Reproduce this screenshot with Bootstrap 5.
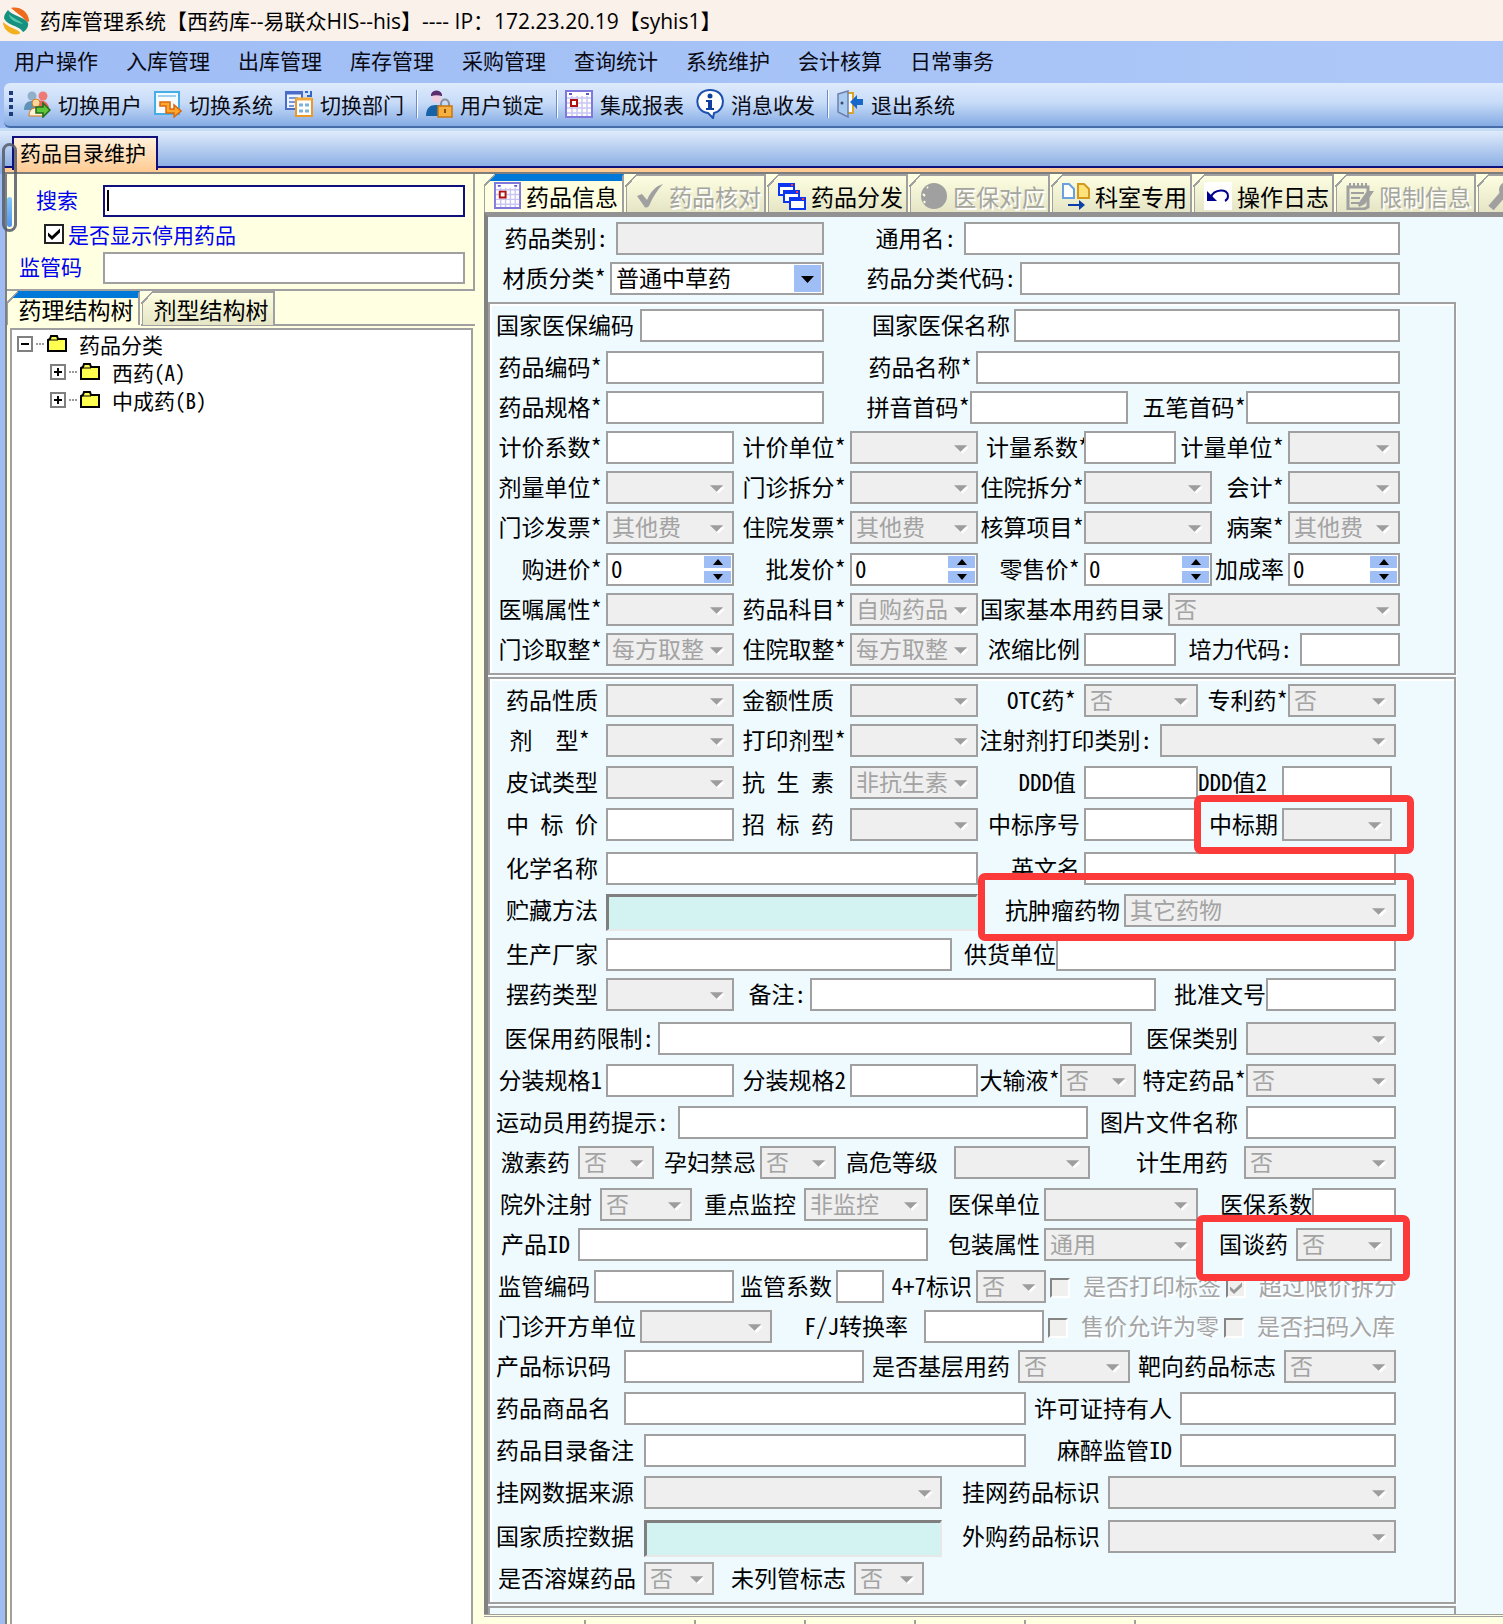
<!DOCTYPE html>
<html lang="zh-CN">
<head>
<meta charset="utf-8">
<meta name="viewport" content="width=device-width, initial-scale=1">
<title>药库管理系统</title>
<link href="https://cdn.jsdelivr.net/npm/bootstrap@5.3.0/dist/css/bootstrap.min.css" rel="stylesheet">
<style>
:root{--line:#a0a0a0;--cream:#ffffe1;--ice:#effaff;--cjk:"Noto Sans Mono CJK SC","Noto Sans CJK SC",sans-serif}
body{font:21px/28px "Noto Sans CJK SC",sans-serif;color:#000;background:#9fbdf3}
button{font:inherit}
svg{display:block;flex:none}

/* window title, menu, toolbar */
.titlebar{height:41px;background:#f9f1ea;padding-left:2px;gap:10px;font-family:"Open Sans","Noto Sans CJK SC",sans-serif}
.menubar{height:42px;background:linear-gradient(90deg,#9fbdf5,#adc8f8);gap:28px;padding:0 0 4px 14px}
.menubar a,.toolbar button{color:#0a0a14;text-decoration:none;white-space:nowrap}
.toolbar{height:45px;margin-left:4px;padding:0 0 2px 5px;border-bottom:2px solid #466ca8;border-radius:6px 0 0 6px;background:linear-gradient(#deeafc,#c8dcf8 45%,#84abe4)}
.toolbar button{border:0;background:none;padding:0;margin-right:12px;gap:7px}
.grip{width:4px;height:26px;margin-right:10px;background:repeating-linear-gradient(#1f3a78 0 4px,transparent 4px 7px)}
.tool-sep{width:2px;height:28px;margin-right:7px;background:linear-gradient(90deg,#6a8ccb 50%,#fff 50%)}
.pagestrip{height:46px;padding:5px 0 0 12px;border-top:3px solid #c4ddf6;background:linear-gradient(#e0ebfb,#86abe3 38px)}
.pagestrip::before{content:"";position:absolute;left:4px;right:0;bottom:0;height:8px;border-top:2px solid #10107c;border-bottom:2px solid #7d7d7d;background:#ffcb92}
.pagetab{position:relative;height:34px;width:146px;border:2px solid #10107c;border-bottom:0;padding:0 0 4px 6px;line-height:28px;text-align:left;background:linear-gradient(#fff0da,#ffcd96);white-space:nowrap}
.edge-scroll{left:2px;top:143px;width:15px;height:89px;border:3px solid #555c68;border-radius:8px;opacity:.85;padding:51px 0 0 2px}
.edge-scroll span{display:block;width:5px;height:30px;border-radius:3px;background:linear-gradient(#6cc0ff,#2f80f0)}

/* work area */
.work{margin-left:5px;border-left:2px solid #808080;background:var(--cream)}
.side{width:468px;flex:none}
.search-box{height:117px;padding:11px 8px 0 0;border:solid var(--line);border-width:0 2px 2px 0}
.search-box label{color:#0000f0}
.search-box .row-label{width:96px;padding-left:12px}
.search-box .form-control{height:32px;border-width:2px}
.search-box .is-focus{border-color:#10107c}
.search-box .tick-line{padding-left:37px;height:28px;margin:3px 0 4px}
.caret{left:4px;top:5px;width:2px;height:21px;background:#000}
.form-control,.form-select{border:2px solid var(--line);border-radius:0;padding:0 0 0 4px;color:#000;font:inherit;line-height:26px;background-color:#fff;min-width:0}
.form-check-input[type=checkbox]{width:20px;height:20px;margin:0;flex:none;border:2px solid #222;border-radius:0;background-color:#fff;float:none}
.form-check-input[type=checkbox]:checked{background-color:#fff;border-color:#222;background-size:16px;background-image:url("data:image/svg+xml,%3csvg xmlns='http://www.w3.org/2000/svg' viewBox='0 0 16 16'%3e%3cpath d='M2 6.500l4 3.500 8-7.500v4l-8 7.500-4-4z'/%3e%3c/svg%3e")}
.form-check-input[type=checkbox]:disabled{opacity:1;background-color:#f0f0ee;border-color:#858585 #fff #fff #858585}
.form-check-input[type=checkbox]:checked:disabled{background-image:url("data:image/svg+xml,%3csvg xmlns='http://www.w3.org/2000/svg' viewBox='0 0 16 16'%3e%3cpath fill='%239a9a9a' d='M2 6.500l4 3.500 8-7.500v4l-8 7.500-4-4z'/%3e%3c/svg%3e")}

.sheet-tabs{flex-wrap:nowrap;gap:2px;overflow:hidden;font:23px/32px var(--cjk)}
.sheet-tabs .nav-link{position:relative;border:2px solid var(--line);border-width:2px 2px 0 1px;border-radius:0;color:#000;white-space:nowrap;background:linear-gradient(#fdfde1,#e5e5c6);padding:0}
.sheet-tabs .nav-link::before{content:"";position:absolute;left:-2px;top:-2px;width:12px;height:13px;background:linear-gradient(to bottom right,var(--cream) 46%,var(--line) 46% 56%,transparent 56%)}
.sheet-tabs .nav-link.active{background:linear-gradient(#0078d7 5px,var(--cream) 5px);border-top-color:#0078d7}
.sheet-tabs .nav-link:disabled{color:#a5a5a0;text-shadow:2px 2px 0 #fff}
.tree-tabs .nav-link{width:133px;height:34px;padding-left:6px}
.info-tabs .nav-link{width:140px;height:38px;padding:3px 0 0 9px;gap:5px;flex:none;display:flex;align-items:center}
.tree-rule{height:2px;margin:-1px 0 2px 134px;background:var(--line)}
.tree{margin:0 2px 0 3px;border:2px solid var(--line);border-bottom:0;background:#fff;padding:0 0 0 5px;font:21px/26px var(--cjk)}
.tree ul{padding-left:33px}
.tree .node{height:28px}
.tree-toggle{width:16px;height:16px;border:2px solid #808080;background:#fff;padding:0}
.tree-dots{width:8px;margin:0 3px;border-top:2px dotted #999}
.tree .node span{margin-left:12px}

.main-pane{min-width:0;margin-left:9px}
.drug-form{border-left:4px solid #828282;border-top:5px solid #929292;background:var(--ice);font:23px/33px var(--cjk)}
.drug-head{padding:5px 103px 0 8px}
.block{margin:0 47px 2px 0;padding:5px 54px 0 6px;border:2px solid var(--line);box-shadow:inset 2px 2px 0 #fff,1px 1px 0 #fff}
.ln{display:flex;align-items:flex-start;min-height:40px;white-space:pre}
.ln-42{min-height:42px}
.ln-44{min-height:44px}
.ln>*{flex:none}
.ln label{flex:none;text-align:right;padding-right:4px;line-height:30px}
.ln .form-control,.ln .form-select{height:33px;padding-bottom:4px}
.ln .form-select{--bs-form-select-bg-img:url("data:image/svg+xml,%3csvg xmlns='http://www.w3.org/2000/svg' viewBox='0 0 16 9'%3e%3cpath fill='%23fff' d='M3 2h13l-7 7z'/%3e%3cpath fill='%239d9d9d' d='M0 0h14l-7 7z'/%3e%3c/svg%3e");background-size:15px 9px;background-position:right 7px bottom 8px}
.ln .form-select:disabled{background-color:#efefef;color:#a3a3a3}
.ln .form-control:disabled{background-color:#efefef}
.ln .is-live{--bs-form-select-bg-img:url("data:image/svg+xml,%3csvg xmlns='http://www.w3.org/2000/svg' viewBox='0 0 27 27'%3e%3cpath fill='%23a0bef6' d='M0 0h27v27H0z'/%3e%3cpath d='M7 11h13l-6.500 7z'/%3e%3c/svg%3e");background-size:27px 27px;background-position:right 1px center}
.ln .sunken{height:37px;border-width:3px 2px 2px 3px;border-color:#7f7f7f #e8e8e8 #e8e8e8 #7f7f7f;background:#d2f3f2}
.spin{height:33px;border:2px solid var(--line);background:#fff;padding:1px}
.spin input{border:0;outline:0;width:10px;padding:0 0 4px 2px;background:none;font:inherit;line-height:23px;appearance:textfield;-moz-appearance:textfield}
.spin input::-webkit-inner-spin-button{appearance:none}
.spin .steps{width:27px;gap:3px;display:flex;flex-direction:column}
.spin button{flex:1;border:0;padding:0;background:#a0bef6;display:flex;align-items:center;justify-content:center}
.ticks label{color:#a5a5a5;text-shadow:2px 2px 0 #fff;padding:0 5px 0 13px}
.ticks .form-check-input{margin:8px 0 0 4px}
.callout{position:absolute;inset:-13px -22px -13px -4px;border:7px solid #fb3a39;border-radius:7px;pointer-events:none}
.callout-wide{inset:-21px -18px -14px 0}
.callout-low{inset:-13px -18px -20px -2px}
.foot-block{height:8px;margin:0 47px 0 0;border:2px solid var(--line);border-bottom:0}
.list-edge{border-top:3px double var(--line);padding-top:3px;min-height:6px;overflow:hidden}
.list-edge span{width:110px;border-right:2px solid var(--line)}
.list-edge span:first-child{width:102px}

/* width scale shared by captions and fields */
.u48{width:48px}.u70{width:70px}.u76{width:76px}.u82{width:82px}.u84{width:84px}.u90{width:90px}.u92{width:92px}.u98{width:98px}
.u102{width:102px}.u104{width:104px}.u106{width:106px}.u110{width:110px}.u112{width:112px}.u114{width:114px}.u116{width:116px}.u118{width:118px}
.u120{width:120px}.u124{width:124px}.u128{width:128px}.u132{width:132px}.u136{width:136px}.u140{width:140px}.u144{width:144px}.u146{width:146px}.u148{width:148px}
.u152{width:152px}.u154{width:154px}.u158{width:158px}.u162{width:162px}.u166{width:166px}.u182{width:182px}.u184{width:184px}.u190{width:190px}.u196{width:196px}
.u208{width:208px}.u214{width:214px}.u218{width:218px}.u240{width:240px}.u298{width:298px}.u346{width:346px}.u350{width:350px}.u372{width:372px}
.u382{width:382px}.u402{width:402px}.u410{width:410px}.u474{width:474px}
</style>
<script src="https://cdn.jsdelivr.net/npm/bootstrap@5.3.0/dist/js/bootstrap.bundle.min.js"></script>
</head>
<body>
<svg width="0" height="0" class="position-absolute">
  <symbol id="cal" viewBox="0 0 28 28"><path fill="#fff" stroke="#8078dc" stroke-width="2" d="M1 1h26v26H1z"/><path stroke="#c9c6f2" stroke-width="1.500" d="M2 8h24M2 13h24M2 18h24M2 23h24M7 6v20M12 6v20M17 6v20M22 6v20"/><path stroke="#5d55c8" stroke-width="2" d="M4 4h3M21 4h3"/><path fill="#fff" stroke="#b01010" stroke-width="2" d="M6 10h6v6H6z"/></symbol>
  <symbol id="folder" viewBox="0 0 20 18"><path fill="#ffff50" stroke="#000" stroke-width="2" d="M1 5l2-1 1-3h6l1 3h8v12H1z"/><path stroke="#000" d="M2 5h9"/></symbol>
  <symbol id="up" viewBox="0 0 10 6"><path d="M5 0l5 6H0z"/></symbol>
  <symbol id="dn" viewBox="0 0 10 6"><path d="M5 6L0 0h10z"/></symbol>
</svg>

<div class="d-flex flex-column min-vh-100 position-relative">
<header>
  <div class="titlebar d-flex align-items-center">
    <svg width="28" height="28" viewBox="0 0 28 28"><path fill="#ee6a1c" d="M9 1c8-2 17 3 18 12 0 3-2 2-4 0C19 8 13 5 9 1z"/><path fill="#f2b01e" d="M1 15c0 8 8 14 16 12 2-1 1-2-2-4C10 21 4 18 1 15z"/><path fill="#17917f" d="M6 3c3 5 18 8 20 13 1 3-2 8-5 9C18 19 4 18 2 11c0-3 2-6 4-8z"/><path fill="#55c9ae" d="M7 7c3 4 10 6 14 10-6-1-14-4-14-10z"/></svg>
    <span>药库管理系统【西药库--易联众HIS--his】---- IP：172.23.20.19【syhis1】</span>
  </div>
  <nav class="menubar d-flex align-items-center">
    <a href="#">用户操作</a><a href="#">入库管理</a><a href="#">出库管理</a><a href="#">库存管理</a><a href="#">采购管理</a><a href="#">查询统计</a><a href="#">系统维护</a><a href="#">会计核算</a><a href="#">日常事务</a>
  </nav>
  <div class="toolbar d-flex align-items-center">
    <span class="grip"></span>
    <button type="button" class="d-flex align-items-center"><svg width="28" height="28" viewBox="0 0 28 28"><circle cx="9" cy="6" r="4.500" fill="#8fb0c8"/><circle cx="20" cy="6" r="4.500" fill="#ee7a78"/><path fill="#5f93b8" d="M1 20c0-6 3-9 8-9s6 4 6 9z"/><path fill="#e86460" d="M14 11c6-2 12 1 12 8H14z"/><circle cx="13" cy="13" r="4" fill="#fbd7a0" stroke="#d9791d"/><path fill="#fff0d8" stroke="#d9791d" d="M6 26c0-6 3-8 7-8s7 2 7 8z"/><path fill="#5fc63c" stroke="#226b18" stroke-width="1.500" d="M13 17h7v-4l7 7-7 7v-4h-7z"/></svg>切换用户</button>
    <button type="button" class="d-flex align-items-center"><svg width="28" height="28" viewBox="0 0 28 28"><path fill="#f5fbff" stroke="#45aee6" stroke-width="2" d="M1 2h24v22H1z"/><path stroke="#9bd0ef" stroke-width="2" d="M4 6h18"/><path fill="#ffa62c" stroke="#d9690e" stroke-width="1.500" d="M6 12h10v7h4v-4l7 6-7 6v-4h-8v-7H6z"/></svg>切换系统</button>
    <button type="button" class="d-flex align-items-center"><svg width="28" height="28" viewBox="0 0 28 28"><path fill="#eef4ff" stroke="#4a6cc8" stroke-width="2" d="M1 2h16v17H1z"/><path stroke="#4a6cc8" stroke-width="3" d="M1 3h16"/><path stroke="#7a98de" stroke-width="2" d="M4 8h9M4 12h6M4 16h5"/><path fill="none" stroke="#3366cc" stroke-width="2" d="M20 2h3M26 1v5h-4"/><path fill="#fff" stroke="#eb9a2a" stroke-width="2" d="M11 9h16v17H11z"/><path stroke="#f0a83c" stroke-width="3" d="M11 9h16"/><path stroke="#7fb2d8" stroke-width="3" d="M14 15h4M20 15h4M14 21h4M20 21h4"/></svg>切换部门</button>
    <span class="tool-sep"></span>
    <button type="button" class="d-flex align-items-center"><svg width="28" height="28" viewBox="0 0 28 28"><path fill="#5b2e6e" d="M6 6c0-7 11-7 11 0z"/><circle cx="11.500" cy="8" r="5" fill="#f0cfe0"/><path fill="#5b2e6e" d="M6 6c0-7 11-7 11 0-4-1-7-1-11 0z"/><path fill="#1763a8" d="M1 26c0-8 4-11 10-11s9 3 9 11z"/><path fill="none" stroke="#8a8f99" stroke-width="2" d="M16 17v-3c0-6 8-6 8 0v3"/><path fill="#f5b040" stroke="#c8760e" stroke-width="1.500" d="M13 16h14v11H13z"/><path fill="#8a5008" d="M19 19h2v4h-2z"/></svg>用户锁定</button>
    <span class="tool-sep"></span>
    <button type="button" class="d-flex align-items-center"><svg width="28" height="28"><use href="#cal"/></svg>集成报表</button>
    <button type="button" class="d-flex align-items-center"><svg width="28" height="30" viewBox="0 0 28 30"><path fill="#fff" stroke="#1d4fae" stroke-width="2" d="M14 1c17 0 16 21 4 23l-1 5-5-5C-3 22-2 1 14 1z"/><circle cx="14" cy="7" r="2.500" fill="#0f3f9e"/><path fill="#0f3f9e" d="M10 11h6v8h2v2h-8v-2h2v-6h-2z"/></svg>消息收发</button>
    <span class="tool-sep"></span>
    <button type="button" class="d-flex align-items-center"><svg width="28" height="28" viewBox="0 0 28 28"><path fill="#fff" stroke="#d6a52e" stroke-width="2" d="M10 3h7v20h-7z"/><path fill="#a8ccf0" stroke="#6f7fae" stroke-width="1.500" d="M2 4l10-3v26L2 22z"/><circle cx="6" cy="13" r="1.500" fill="#446"/><path fill="#1767c8" d="M14 12l7-7v4h6v6h-6v4z"/></svg>退出系统</button>
  </div>
  <div class="pagestrip position-relative"><button type="button" class="pagetab">药品目录维护</button></div>
</header>
<div class="edge-scroll position-absolute"><span></span></div>

<div class="work d-flex flex-grow-1">
  <aside class="side d-flex flex-column">
    <div class="search-box">
      <div class="d-flex">
        <label class="row-label text-center pe-2" for="q">搜索</label>
        <div class="position-relative flex-fill"><input id="q" class="form-control is-focus" type="text"><span class="caret position-absolute"></span></div>
      </div>
      <div class="tick-line d-flex align-items-center"><input class="form-check-input" type="checkbox" id="stop" checked><label class="ps-1" for="stop">是否显示停用药品</label></div>
      <div class="d-flex"><label class="row-label" for="code">监管码</label><div class="flex-fill"><input id="code" class="form-control" type="text"></div></div>
    </div>
    <div class="nav sheet-tabs tree-tabs" role="tablist">
      <button type="button" class="nav-link active" role="tab">药理结构树</button>
      <button type="button" class="nav-link" role="tab">剂型结构树</button>
    </div>
    <div class="tree-rule"></div>
    <div class="tree flex-grow-1">
      <div class="node d-flex align-items-center"><button type="button" class="tree-toggle" aria-label="收起"><svg width="12" height="12" viewBox="0 0 12 12"><path stroke="#000" stroke-width="2" d="M2 6h8"/></svg></button><i class="tree-dots"></i><svg width="20" height="18"><use href="#folder"/></svg><span>药品分类</span></div>
      <ul class="list-unstyled m-0">
        <li class="node d-flex align-items-center"><button type="button" class="tree-toggle" aria-label="展开"><svg width="12" height="12" viewBox="0 0 12 12"><path stroke="#000" stroke-width="2" d="M2 6h8M6 2v8"/></svg></button><i class="tree-dots"></i><svg width="20" height="18"><use href="#folder"/></svg><span>西药(A)</span></li>
        <li class="node d-flex align-items-center"><button type="button" class="tree-toggle" aria-label="展开"><svg width="12" height="12" viewBox="0 0 12 12"><path stroke="#000" stroke-width="2" d="M2 6h8M6 2v8"/></svg></button><i class="tree-dots"></i><svg width="20" height="18"><use href="#folder"/></svg><span>中成药(B)</span></li>
      </ul>
    </div>
  </aside>

  <main class="main-pane flex-fill d-flex flex-column">
    <div class="nav sheet-tabs info-tabs" role="tablist">
      <button type="button" class="nav-link active" role="tab"><svg width="27" height="27"><use href="#cal"/></svg>药品信息</button>
      <button type="button" class="nav-link" role="tab" disabled><svg width="28" height="28" viewBox="0 0 28 28"><path fill="#a0a0a0" d="M1 14l5-2 5 6C15 9 20 4 27 2c-6 6-10 13-14 22-2 2-4 2-5 0z"/></svg>药品核对</button>
      <button type="button" class="nav-link" role="tab"><svg width="28" height="28" viewBox="0 0 28 28"><g fill="#fff" stroke="#0b36f0" stroke-width="2"><path d="M1 2h15v11H1z"/><path d="M6 9h15v11H6z"/><path d="M12 16h15v11H12z"/></g><path stroke="#0b36f0" stroke-width="4" d="M1 3h15M6 10h15M12 17h15"/><path stroke="#ff3a3a" stroke-width="2" d="M13 3h2M18 10h2M24 17h2"/></svg>药品分发</button>
      <button type="button" class="nav-link" role="tab" disabled><svg width="28" height="28" viewBox="0 0 28 28"><circle cx="14" cy="14" r="13" fill="#a0a0a0"/><path fill="none" stroke="#fdfde1" stroke-width="2" d="M3 12l2 2M7 5l1 1M4 19l1 2"/></svg>医保对应</button>
      <button type="button" class="nav-link" role="tab"><svg width="28" height="28" viewBox="0 0 28 28"><path fill="#fff" stroke="#6aa2de" stroke-width="2" d="M1 2h6l5 5v9H1z"/><path fill="#ffe37a" stroke="#d49a1e" stroke-width="2" d="M16 2h6l5 5v9H16z"/><path fill="#0a3fa8" d="M6 22h11v-4l6 5-6 5v-4H6z"/></svg>科室专用</button>
      <button type="button" class="nav-link" role="tab"><svg width="28" height="28" viewBox="0 0 28 28"><path fill="#fff" d="M0 0h28v28H0z"/><path fill="#000090" d="M3 9v10h10z"/><path fill="none" stroke="#000090" stroke-width="2" d="M7 15c3-8 17-9 17-1 0 3-1 4-3 5"/></svg>操作日志</button>
      <button type="button" class="nav-link" role="tab" disabled><svg width="28" height="28" viewBox="0 0 28 28"><path fill="none" stroke="#a0a0a0" stroke-width="3" d="M2 5h20v20l-4 2H2z"/><path stroke="#a0a0a0" stroke-width="2" d="M4 1v4M8 1v4M12 1v4M16 1v4M20 1v4M5 11h13M5 16h9M5 21h8"/><path fill="#a0a0a0" d="M12 22l9-13h7l-9 13-6 3z"/></svg>限制信息</button>
      <button type="button" class="nav-link" role="tab" disabled aria-label="更多"><svg width="28" height="28" viewBox="0 0 28 28"><circle cx="19" cy="8" r="8" fill="#a0a0a0"/><path stroke="#a0a0a0" stroke-width="7" d="M16 11L3 26"/></svg></button>
    </div>

    <form class="drug-form">
      <div class="drug-head">
        <div class="ln"><label class="u120 pe-2" for="a1">药品类别:</label><input id="a1" class="form-control u208" disabled><label class="u140 pe-2" for="a2">通用名:</label><input id="a2" class="form-control flex-fill"></div>
        <div class="ln"><label class="u114" for="a3">材质分类*</label><select id="a3" class="form-select is-live u214"><option>普通中草药</option></select><label class="u196" for="a4">药品分类代码:</label><input id="a4" class="form-control flex-fill"></div>
      </div>

      <div class="block">
        <div class="ln ln-42"><label class="u144 pe-2" for="b1">国家医保编码</label><input id="b1" class="form-control u184"><label class="u190" for="b2">国家医保名称</label><input id="b2" class="form-control flex-fill"></div>
        <div class="ln"><label class="u110" for="b3">药品编码*</label><input id="b3" class="form-control u218"><label class="u152" for="b4">药品名称*</label><input id="b4" class="form-control flex-fill"></div>
        <div class="ln"><label class="u110" for="b5">药品规格*</label><input id="b5" class="form-control u218"><label class="u146 pe-0" for="b6">拼音首码*</label><input id="b6" class="form-control u158"><label class="u118 pe-0" for="b7">五笔首码*</label><input id="b7" class="form-control flex-fill"></div>
        <div class="ln"><label class="u110" for="c1">计价系数*</label><input id="c1" class="form-control u128"><label class="u116" for="c2">计价单位*</label><select id="c2" class="form-select u128" disabled></select><label class="u106 ps-2 pe-0 text-start" for="c3">计量系数*</label><input id="c3" class="form-control u92 position-relative"><label class="u112" for="c4">计量单位*</label><select id="c4" class="form-select flex-fill" disabled></select></div>
        <div class="ln"><label class="u110" for="c5">剂量单位*</label><select id="c5" class="form-select u128" disabled></select><label class="u116" for="c6">门诊拆分*</label><select id="c6" class="form-select u128" disabled></select><label class="u106 pe-0" for="c7">住院拆分*</label><select id="c7" class="form-select u128" disabled></select><label class="u76" for="c8">会计*</label><select id="c8" class="form-select flex-fill" disabled></select></div>
        <div class="ln ln-42"><label class="u110" for="d1">门诊发票*</label><select id="d1" class="form-select u128" disabled><option>其他费</option></select><label class="u116" for="d2">住院发票*</label><select id="d2" class="form-select u128" disabled><option>其他费</option></select><label class="u106 pe-0" for="d3">核算项目*</label><select id="d3" class="form-select u128" disabled></select><label class="u76" for="d4">病案*</label><select id="d4" class="form-select flex-fill" disabled><option>其他费</option></select></div>
        <div class="ln">
          <label class="u110" for="e1">购进价*</label><div class="spin d-flex u128"><input id="e1" type="number" value="0" class="flex-fill"><div class="steps"><button type="button" aria-label="加"><svg width="10" height="6"><use href="#up"/></svg></button><button type="button" aria-label="减"><svg width="10" height="6"><use href="#dn"/></svg></button></div></div>
          <label class="u116" for="e2">批发价*</label><div class="spin d-flex u128"><input id="e2" type="number" value="0" class="flex-fill"><div class="steps"><button type="button" aria-label="加"><svg width="10" height="6"><use href="#up"/></svg></button><button type="button" aria-label="减"><svg width="10" height="6"><use href="#dn"/></svg></button></div></div>
          <label class="u106" for="e3">零售价*</label><div class="spin d-flex u128"><input id="e3" type="number" value="0" class="flex-fill"><div class="steps"><button type="button" aria-label="加"><svg width="10" height="6"><use href="#up"/></svg></button><button type="button" aria-label="减"><svg width="10" height="6"><use href="#dn"/></svg></button></div></div>
          <label class="u76" for="e4">加成率</label><div class="spin d-flex flex-fill"><input id="e4" type="number" value="0" class="flex-fill"><div class="steps"><button type="button" aria-label="加"><svg width="10" height="6"><use href="#up"/></svg></button><button type="button" aria-label="减"><svg width="10" height="6"><use href="#dn"/></svg></button></div></div>
        </div>
        <div class="ln"><label class="u110" for="f1">医嘱属性*</label><select id="f1" class="form-select u128" disabled></select><label class="u116" for="f2">药品科目*</label><select id="f2" class="form-select u128" disabled><option>自购药品</option></select><label class="u190" for="f3">国家基本用药目录</label><select id="f3" class="form-select flex-fill" disabled><option>否</option></select></div>
        <div class="ln"><label class="u110" for="f4">门诊取整*</label><select id="f4" class="form-select u128" disabled><option>每方取整</option></select><label class="u116" for="f5">住院取整*</label><select id="f5" class="form-select u128" disabled><option>每方取整</option></select><label class="u106" for="f6">浓缩比例</label><input id="f6" class="form-control u92"><label class="u124 pe-2" for="f7">培力代码:</label><input id="f7" class="form-control flex-fill"></div>
      </div>

      <div class="block">
        <div class="ln"><label class="u110 pe-2" for="g1">药品性质</label><select id="g1" class="form-select u128" disabled></select><label class="u116 pe-3" for="g2">金额性质</label><select id="g2" class="form-select u128" disabled></select><label class="u106 pe-2" for="g3">OTC药*</label><select id="g3" class="form-select u114" disabled><option>否</option></select><label class="u90 pe-0" for="g4">专利药*</label><select id="g4" class="form-select flex-fill me-1" disabled><option>否</option></select></div>
        <div class="ln ln-42"><label class="u110 pe-3" for="g5">剂&emsp;型*</label><select id="g5" class="form-select u128" disabled></select><label class="u116" for="g6">打印剂型*</label><select id="g6" class="form-select u128" disabled></select><label class="u182 pe-2" for="g7">注射剂打印类别:</label><select id="g7" class="form-select flex-fill me-1" disabled></select></div>
        <div class="ln ln-42"><label class="u110 pe-2" for="h1">皮试类型</label><select id="h1" class="form-select u128" disabled></select><label class="u116 pe-3" for="h2">抗 生 素</label><select id="h2" class="form-select u128" disabled><option>非抗生素</option></select><label class="u106 pe-2" for="h3">DDD值</label><input id="h3" class="form-control u114"><label class="u84 text-start" for="h4">DDD值2</label><input id="h4" class="form-control flex-fill me-2"></div>
        <div class="ln ln-44"><label class="u110 pe-2" for="h5">中 标 价</label><input id="h5" class="form-control u128"><label class="u116 pe-3" for="h6">招 标 药</label><select id="h6" class="form-select u128" disabled></select><label class="u106" for="h7">中标序号</label><input id="h7" class="form-control u114"><div class="d-flex flex-fill position-relative me-2"><label class="u84" for="h8">中标期</label><select id="h8" class="form-select flex-fill" disabled></select><span class="callout"></span></div></div>
        <div class="ln ln-42"><label class="u110 pe-2" for="i1">化学名称</label><input id="i1" class="form-control u372"><label class="u106" for="i2">英文名</label><input id="i2" class="form-control flex-fill me-1"></div>
        <div class="ln ln-44"><label class="u110 pe-2" for="i3">贮藏方法</label><input id="i3" class="form-control sunken u372"><div class="d-flex flex-fill position-relative me-1"><label class="u146" for="i4">抗肿瘤药物</label><select id="i4" class="form-select flex-fill" disabled><option>其它药物</option></select><span class="callout callout-wide"></span></div></div>
        <div class="ln"><label class="u110 pe-2" for="j1">生产厂家</label><input id="j1" class="form-control u346"><label class="u104 pe-0" for="j2">供货单位</label><input id="j2" class="form-control flex-fill me-1"></div>
        <div class="ln ln-44"><label class="u110 pe-2" for="j3">摆药类型</label><select id="j3" class="form-select u128" disabled></select><label class="u76" for="j4">备注:</label><input id="j4" class="form-control u346"><label class="u110 pe-0" for="j5">批准文号</label><input id="j5" class="form-control flex-fill me-1"></div>
        <div class="ln ln-42"><label class="u162" for="k1">医保用药限制:</label><input id="k1" class="form-control u474"><label class="u114 pe-2" for="k2">医保类别</label><select id="k2" class="form-select flex-fill me-1" disabled></select></div>
        <div class="ln ln-42"><label class="u110" for="k3">分装规格1</label><input id="k3" class="form-control u128"><label class="u116" for="k4">分装规格2</label><input id="k4" class="form-control u128"><label class="u82 pe-0" for="k5">大输液*</label><select id="k5" class="form-select u76" disabled><option>否</option></select><label class="u110 pe-0" for="k6">特定药品*</label><select id="k6" class="form-select flex-fill me-1" disabled><option>否</option></select></div>
        <div class="ln"><label class="u182 text-start" for="l1">运动员用药提示:</label><input id="l1" class="form-control u410"><label class="u158 pe-2" for="l2">图片文件名称</label><input id="l2" class="form-control flex-fill me-1"></div>
        <div class="ln ln-42"><label class="u82 pe-2" for="l3">激素药</label><select id="l3" class="form-select u76" disabled><option>否</option></select><label class="u106" for="l4">孕妇禁忌</label><select id="l4" class="form-select u76" disabled><option>否</option></select><label class="u118 pe-3" for="l5">高危等级</label><select id="l5" class="form-select u136" disabled></select><label class="u154 pe-3" for="l6">计生用药</label><select id="l6" class="form-select flex-fill me-1" disabled><option>否</option></select></div>
        <div class="ln"><label class="u104 pe-2" for="m1">院外注射</label><select id="m1" class="form-select u92" disabled><option>否</option></select><label class="u112 pe-2" for="m2">重点监控</label><select id="m2" class="form-select u124" disabled><option>非监控</option></select><label class="u116" for="m3">医保单位</label><select id="m3" class="form-select u154" disabled></select><label class="u114 pe-0" for="m4">医保系数</label><input id="m4" class="form-control flex-fill me-1"></div>
        <div class="ln ln-42"><label class="u82 pe-2" for="m5">产品ID</label><input id="m5" class="form-control u350"><label class="u116" for="m6">包装属性</label><select id="m6" class="form-select u154" disabled><option>通用</option></select><div class="d-flex flex-fill position-relative me-2"><label class="u98 pe-2" for="m7">国谈药</label><select id="m7" class="form-select flex-fill" disabled><option>否</option></select><span class="callout callout-low"></span></div></div>
        <div class="ln"><label class="u98" for="n1">监管编码</label><input id="n1" class="form-control u140"><label class="u102" for="n2">监管系数</label><input id="n2" class="form-control u48"><label class="u92" for="n3">4+7标识</label><select id="n3" class="form-select u70" disabled><option>否</option></select><div class="ticks d-flex"><input class="form-check-input" type="checkbox" id="n4" disabled><label for="n4">是否打印标签</label><input class="form-check-input ms-0" type="checkbox" id="n5" checked disabled><label class="pe-0" for="n5">超过限价拆分</label></div></div>
        <div class="ln"><label class="u144" for="n6">门诊开方单位</label><select id="n6" class="form-select u132" disabled></select><label class="u152 pe-3" for="n7">F/J转换率</label><input id="n7" class="form-control u120"><div class="ticks d-flex"><input class="form-check-input" type="checkbox" id="n8" disabled><label for="n8">售价允许为零</label><input class="form-check-input ms-0" type="checkbox" id="n9" disabled><label class="pe-0" for="n9">是否扫码入库</label></div></div>
        <div class="ln ln-42"><label class="u128 text-start" for="o1">产品标识码</label><input id="o1" class="form-control u240"><label class="u154 pe-2" for="o2">是否基层用药</label><select id="o2" class="form-select u112" disabled><option>否</option></select><label class="u154 pe-2" for="o3">靶向药品标志</label><select id="o3" class="form-select flex-fill me-1" disabled><option>否</option></select></div>
        <div class="ln ln-42"><label class="u128 text-start" for="p1">药品商品名</label><input id="p1" class="form-control u402"><label class="u154 pe-2" for="p2">许可证持有人</label><input id="p2" class="form-control flex-fill me-1"></div>
        <div class="ln ln-42"><label class="u148 text-start" for="p3">药品目录备注</label><input id="p3" class="form-control u382"><label class="u154 pe-2" for="p4">麻醉监管ID</label><input id="p4" class="form-control flex-fill me-1"></div>
        <div class="ln ln-44"><label class="u148 text-start" for="q1">挂网数据来源</label><select id="q1" class="form-select u298" disabled></select><label class="u166 pe-2" for="q2">挂网药品标识</label><select id="q2" class="form-select flex-fill me-1" disabled></select></div>
        <div class="ln ln-42"><label class="u148 text-start" for="q3">国家质控数据</label><input id="q3" class="form-control sunken u298"><label class="u166 pe-2" for="q4">外购药品标识</label><select id="q4" class="form-select flex-fill me-1" disabled></select></div>
        <div class="ln"><label class="u148 pe-2" for="r1">是否溶媒药品</label><select id="r1" class="form-select u70" disabled><option>否</option></select><label class="u140 pe-2" for="r2">未列管标志</label><select id="r2" class="form-select u70" disabled><option>否</option></select></div>
      </div>
      <div class="foot-block"></div>
    </form>
    <div class="list-edge d-flex flex-grow-1"><span></span><span></span><span></span><span></span><span></span><span></span></div>
  </main>
</div>
</div>
</body>
</html>
